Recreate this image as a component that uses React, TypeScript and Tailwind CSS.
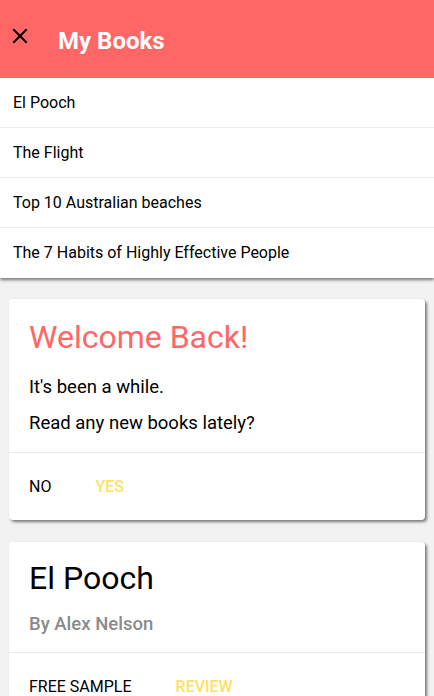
const books = [
  "El Pooch",
  "The Flight",
  "Top 10 Australian beaches",
  "The 7 Habits of Highly Effective People",
];

function CloseIcon() {
  return (
    <svg width="16" height="16" viewBox="0 0 16 16" className="block">
      <path d="M2 2 L14 14 M14 2 L2 14" stroke="#000" strokeWidth="2" strokeLinecap="square" />
    </svg>
  );
}

export default function App() {
  return (
    <div className="min-h-[696px] bg-[#f2f2f2] font-['Roboto',sans-serif] overflow-hidden">
      <div className="relative z-10 bg-white shadow-[0_2px_3px_rgba(0,0,0,0.5)]">
        <header className="flex h-[78px] items-center bg-[#ff6666]">
          <div className="mb-[6px] w-[58px] pl-3">
            <CloseIcon />
          </div>
          <h1 className="mt-[3px] text-[24px] font-bold text-white">My Books</h1>
        </header>
        <ul>
          {books.map((b, i) => (
            <li
              key={b}
              className={`flex h-[50px] items-center px-[13px] text-[16px] text-black ${
                i < books.length - 1 ? "border-b border-[#ececec]" : ""
              }`}
            >
              {b}
            </li>
          ))}
        </ul>
      </div>

      <div className="mx-[9px] mt-[21px] rounded-[4px] bg-white shadow-[2px_2px_3px_rgba(0,0,0,0.5)]">
        <div className="border-b border-[#ebebeb] px-5 pt-5 pb-[17px]">
          <h2 className="text-[32px] leading-[36px] text-[#ff6666]">Welcome Back!</h2>
          <p className="mt-5 text-[18.5px] leading-[24px] text-black">It's been a while.</p>
          <p className="mt-3 text-[18.5px] leading-[24px] text-black">Read any new books lately?</p>
        </div>
        <div className="flex h-[67px] items-center gap-11 px-5 text-[16px]">
          <button className="text-black">NO</button>
          <button className="font-medium text-[#ffe066]">YES</button>
        </div>
      </div>

      <div className="mx-[9px] mt-[22px] rounded-[4px] bg-white shadow-[2px_2px_3px_rgba(0,0,0,0.5)]">
        <div className="border-b border-[#ebebeb] px-5 pt-[18px] pb-[16px]">
          <h2 className="text-[32px] leading-[36px] text-black">El Pooch</h2>
          <p className="mt-4 text-[18.5px] leading-[24px] font-medium text-[#8a8a8a]">By Alex Nelson</p>
        </div>
        <div className="flex h-[67px] items-center gap-11 px-5 text-[16px]">
          <button className="text-black">FREE SAMPLE</button>
          <button className="font-medium text-[#ffe066]">REVIEW</button>
        </div>
      </div>
    </div>
  );
}
